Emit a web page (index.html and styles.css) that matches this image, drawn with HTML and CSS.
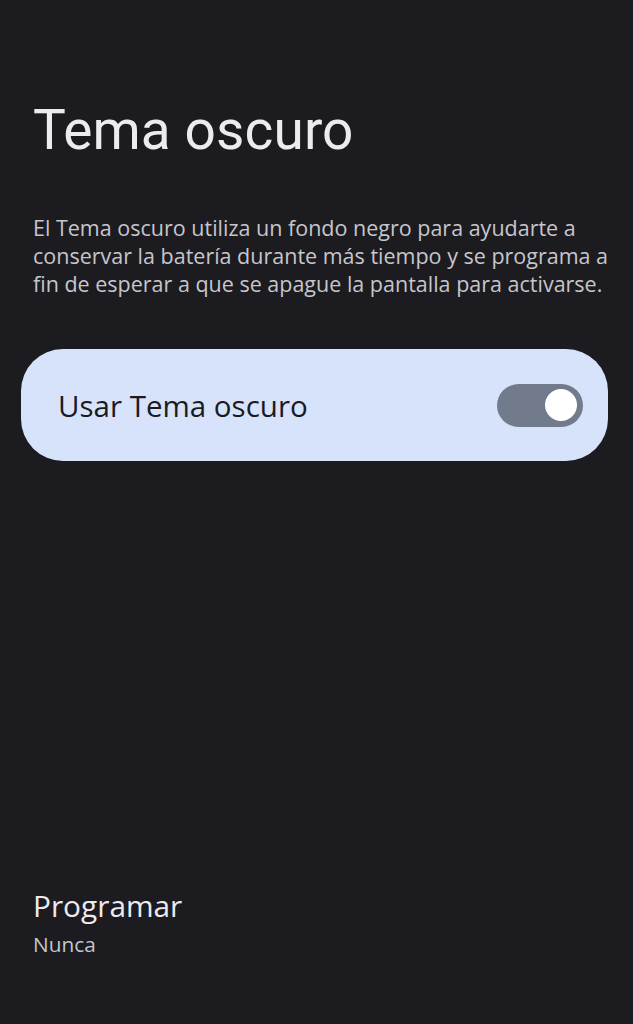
FILE: index.html
```html
<!DOCTYPE html>
<html lang="es">
<head>
<meta charset="utf-8">
<title>Tema oscuro</title>
<link rel="stylesheet" href="styles.css">
</head>
<body>
<main class="page">
  <h1 class="title">Tema oscuro</h1>
  <p class="desc">El Tema oscuro utiliza un fondo negro para ayudarte a conservar la batería durante más tiempo y se programa a fin de esperar a que se apague la pantalla para activarse.</p>
  <div class="card">
    <span class="card-label">Usar Tema oscuro</span>
    <span class="switch"><span class="thumb"></span></span>
  </div>
  <div class="spacer"></div>
  <div class="schedule">
    <div class="sched-title">Programar</div>
    <div class="sched-sub">Nunca</div>
  </div>
</main>
</body>
</html>
```

FILE: styles.css
```css
html, body {
  margin: 0;
  padding: 0;
  background: #1c1b1f;
  height: 100%;
}
body {
  font-family: "Open Sans", Roboto, sans-serif;
}
.page {
  display: flex;
  flex-direction: column;
  height: 1024px;
  box-sizing: border-box;
  padding: 98px 0 0 0;
}
.title {
  margin: 0 0 0 33px;
  font-family: Roboto, sans-serif;
  font-size: 55px;
  font-weight: 400;
  color: #ecebf0;
  line-height: 64px;
  letter-spacing: 0.1px;
}
.desc {
  margin: 52px 20px 0 33px;
  font-size: 21.5px;
  line-height: 28px;
  color: #c7c6cc;
}
.card {
  margin: 51px 25px 0 21px;
  height: 112px;
  border-radius: 42px;
  background: #d6e3fb;
  display: flex;
  align-items: center;
  justify-content: space-between;
  padding: 0 25px 0 37px;
}
.card-label {
  font-size: 29.5px;
  color: #1b1b1f;
}
.switch {
  width: 86px;
  height: 43px;
  border-radius: 22px;
  background: #727b8b;
  display: flex;
  align-items: center;
  justify-content: flex-end;
  padding-right: 6px;
  box-sizing: border-box;
}
.thumb {
  width: 32px;
  height: 32px;
  border-radius: 50%;
  background: #ffffff;
}
.spacer {
  flex: 1;
}
.schedule {
  margin: 0 0 66px 33px;
}
.sched-title {
  font-size: 29.8px;
  color: #eceaf0;
  line-height: 36px;
}
.sched-sub {
  font-size: 20.8px;
  color: #c4c4ca;
  line-height: 28px;
  margin-top: 6px;
}
```
